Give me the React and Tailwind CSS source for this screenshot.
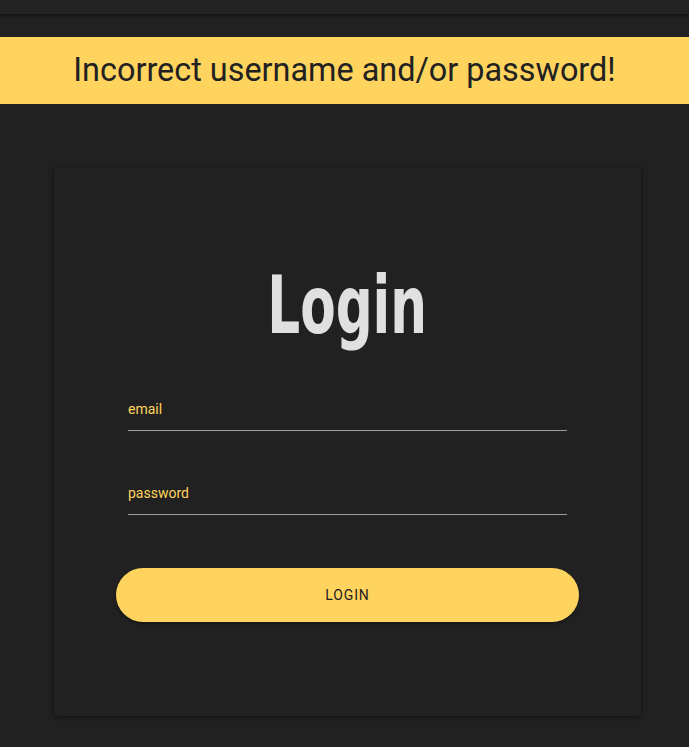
export default function App() {
  return (
    <div className="min-h-[747px] bg-[#212121] font-['Roboto',sans-serif]">
      <div className="h-[14px] bg-[#232323] shadow-[0_2px_3px_rgba(0,0,0,0.45)]" />

      <div className="mt-[23px] flex h-[67px] items-center justify-center bg-[#ffd45e]">
        <p className="text-[32.4px] leading-none text-[#212121]">Incorrect username and/or password!</p>
      </div>

      <div className="ml-[54px] mt-[63px] flex h-[549px] w-[587px] flex-col items-center bg-[#212121] shadow-[0_1px_4px_rgba(0,0,0,0.55)]">
        <h1 className="mt-[89px] origin-center scale-x-[0.7] scale-y-[0.97] font-['DejaVu_Sans',sans-serif] text-[82px] font-bold leading-[100px] text-[#e0e0e0] [font-stretch:condensed]">
          Login
        </h1>

        <form className="mt-[41px] w-full">
          <Field label="email" />
          <Field label="password" className="mt-[50px]" />

          <div className="px-[62px] pt-[53px]">
            <button
              type="button"
              className="h-[54px] w-full rounded-full bg-[#ffd45e] text-[14px] tracking-[0.06em] text-[#212121] shadow-[0_2px_3px_rgba(0,0,0,0.35)]"
            >
              LOGIN
            </button>
          </div>
        </form>
      </div>
    </div>
  );
}

function Field({ label, className = '' }) {
  return (
    <div className={`px-[74px] ${className}`}>
      <div className="border-b border-[#9e9e9e] pb-[9px]">
        <span className="text-[14px] leading-[16px] text-[#ffd45e]">{label}</span>
      </div>
    </div>
  );
}
